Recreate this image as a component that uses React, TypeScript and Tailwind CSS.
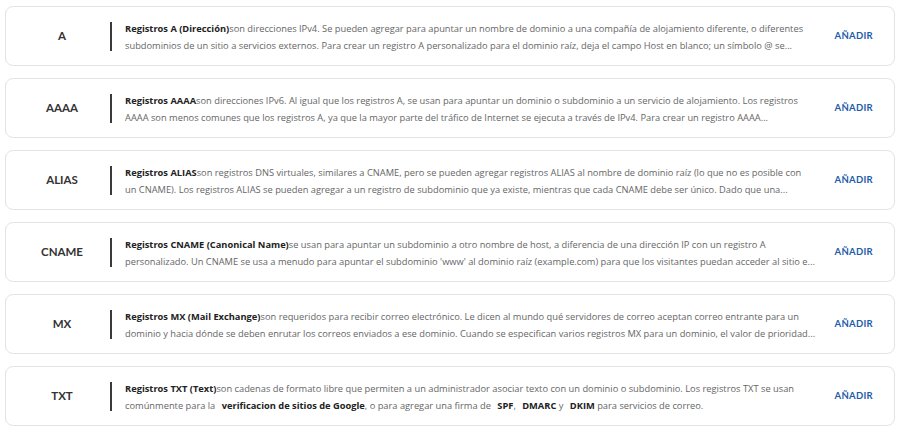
import React from "react";

interface RecordRow {
    type: string;
    lines: React.ReactNode[];
}

const B = ({ children }: { children: React.ReactNode }) => (
    <span className="font-bold text-[#222]">{children}</span>
);

const records: RecordRow[] = [
    {
        type: "A",
        lines: [
            <><B>Registros A (Dirección)</B>son direcciones IPv4. Se pueden agregar para apuntar un nombre de dominio a una compañía de alojamiento diferente, o diferentes</>,
            <>subdominios de un sitio a servicios externos. Para crear un registro A personalizado para el dominio raíz, deja el campo Host en blanco; un símbolo @ se...</>,
        ],
    },
    {
        type: "AAAA",
        lines: [
            <><B>Registros AAAA</B>son direcciones IPv6. Al igual que los registros A, se usan para apuntar un dominio o subdominio a un servicio de alojamiento. Los registros</>,
            <>AAAA son menos comunes que los registros A, ya que la mayor parte del tráfico de Internet se ejecuta a través de IPv4. Para crear un registro AAAA...</>,
        ],
    },
    {
        type: "ALIAS",
        lines: [
            <><B>Registros ALIAS</B>son registros DNS virtuales, similares a CNAME, pero se pueden agregar registros ALIAS al nombre de dominio raíz (lo que no es posible con</>,
            <>un CNAME). Los registros ALIAS se pueden agregar a un registro de subdominio que ya existe, mientras que cada CNAME debe ser único. Dado que una...</>,
        ],
    },
    {
        type: "CNAME",
        lines: [
            <><B>Registros CNAME (Canonical Name)</B>se usan para apuntar un subdominio a otro nombre de host, a diferencia de una dirección IP con un registro A</>,
            <>personalizado. Un CNAME se usa a menudo para apuntar el subdominio 'www' al dominio raíz (example.com) para que los visitantes puedan acceder al sitio e...</>,
        ],
    },
    {
        type: "MX",
        lines: [
            <><B>Registros MX (Mail Exchange)</B>son requeridos para recibir correo electrónico. Le dicen al mundo qué servidores de correo aceptan correo entrante para un</>,
            <>dominio y hacia dónde se deben enrutar los correos enviados a ese dominio. Cuando se especifican varios registros MX para un dominio, el valor de prioridad...</>,
        ],
    },
    {
        type: "TXT",
        lines: [
            <><B>Registros TXT (Text)</B>son cadenas de formato libre que permiten a un administrador asociar texto con un dominio o subdominio. Los registros TXT se usan</>,
            <>comúnmente para la <span className="ml-[4px]"><B>verificacion de sitios de Google</B></span>, o para agregar una firma de <span className="ml-[4px]"><B>SPF</B></span>, <span className="ml-[4px]"><B>DMARC</B></span> y <span className="ml-[4px]"><B>DKIM</B></span> para servicios de correo.</>,
        ],
    },
];

const RecordCard = ({ row }: { row: RecordRow }) => (
    <div className="flex h-[60px] items-center rounded-[8px] border border-[#e3e3e3] bg-white">
        <div className="w-[104px] pl-[8px] text-center text-[11.5px] font-bold text-[#333]" style={{ fontFamily: "Lato, sans-serif" }}>{row.type}</div>
        <div className="h-[29px] w-[2px] bg-[#3a3a3a]" />
        <div className="ml-[13px] flex-1 pt-[1px] text-[9.3px] leading-[17px] text-[#666]" style={{ fontFamily: "'Open Sans', sans-serif" }}>
            {row.lines.map((line, i) => (
                <div key={i} className="whitespace-nowrap">{line}</div>
            ))}
        </div>
        <button className="mr-[21px] text-[9.5px] font-bold tracking-[0.3px] text-[#1c5ca8]" style={{ fontFamily: "Lato, sans-serif" }}>AÑADIR</button>
    </div>
);

export default function App() {
    return (
        <div className="flex min-h-[432px] w-[900px] flex-col gap-[12px] bg-white px-[5px] pt-[6px]">
            {records.map((r) => (
                <RecordCard key={r.type} row={r} />
            ))}
        </div>
    );
}
